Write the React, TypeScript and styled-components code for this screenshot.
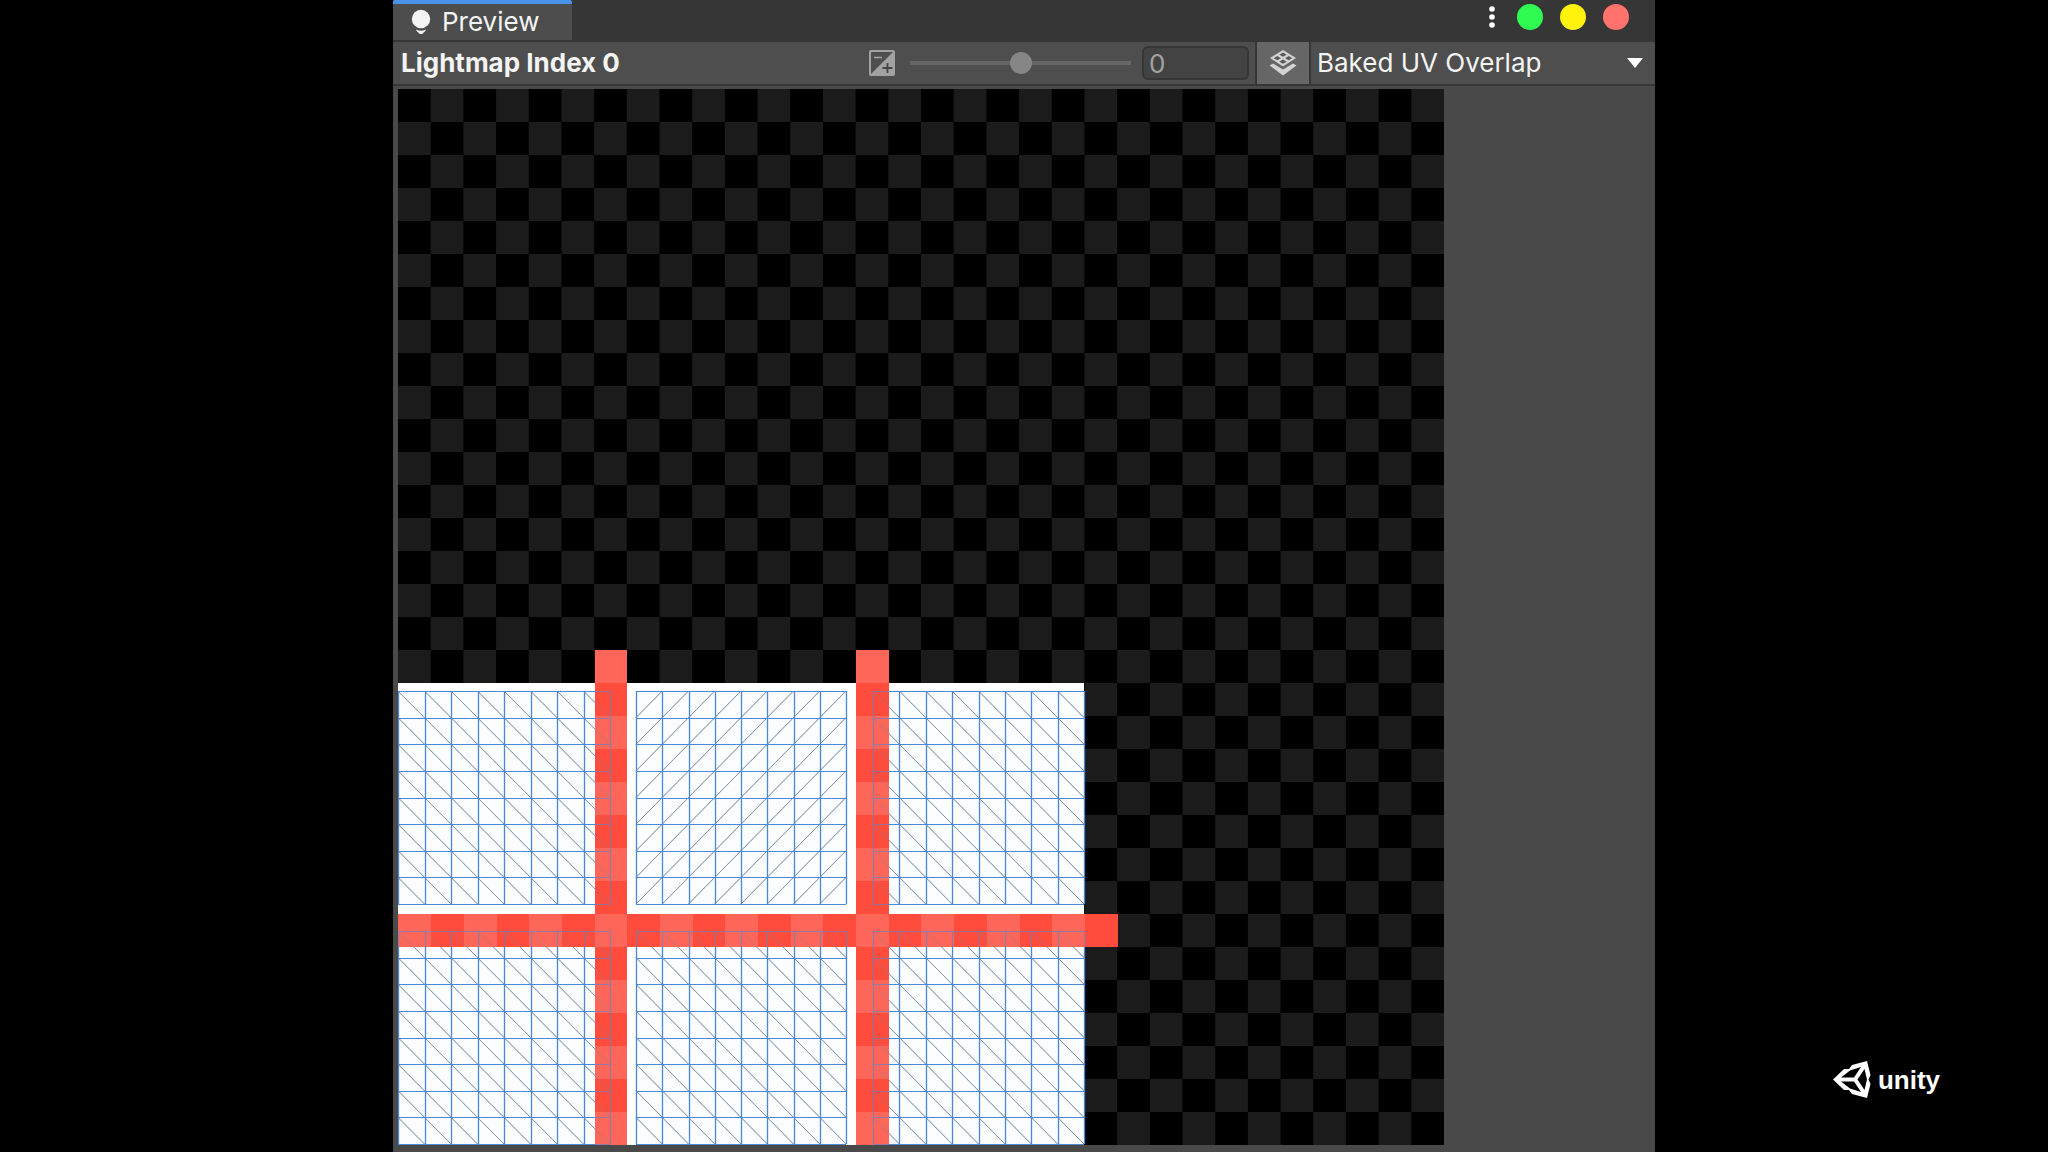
import React from "react";
import styled, { createGlobalStyle } from "styled-components";

const GlobalStyle = createGlobalStyle`
  * { box-sizing: border-box; }
  body { margin: 0; background: #000; }
`;

const Page = styled.div`
  display: grid;
  grid-template-columns: 393fr 1262fr 393fr;
  min-height: 100vh;
  background: #000;
  color: #f4f4f4;
  font-family: Inter, "Liberation Sans", sans-serif;
  font-size: 26px;
  line-height: 32px;
`;

const Window = styled.main`
  grid-column: 2;
  display: flex;
  flex-direction: column;
  background: #4a494a;
`;

const TabBar = styled.header`
  display: flex;
  align-items: stretch;
  height: 40px;
  background: #363636;
`;

const Tab = styled.button`
  display: flex;
  align-items: center;
  gap: 11px;
  padding: 0 32px 0 18px;
  border: 0;
  border-top: 4px solid #4a93ea;
  border-radius: 2px 2px 0 0;
  background: #4d4d4d;
  color: inherit;
  font: inherit;
`;

const WindowControls = styled.div`
  display: flex;
  align-items: center;
  gap: 17px;
  margin-left: auto;
  padding: 0 26px 6px 0;
`;

const MenuButton = styled.button`
  display: flex;
  padding: 0;
  margin-right: 5px;
  border: 0;
  background: none;
`;

const Light = styled.button<{ $color: string }>`
  width: 26px;
  height: 26px;
  padding: 0;
  border: 0;
  border-radius: 50%;
  background: ${(p) => p.$color};
`;

const Toolbar = styled.div`
  display: flex;
  align-items: stretch;
  height: 46px;
  border-top: 2px solid #363636;
  border-bottom: 2px solid #363636;
  background: #4e4e4e;
`;

const Title = styled.h1`
  display: flex;
  align-items: center;
  margin: 0 auto 0 0;
  padding-left: 8px;
  font: inherit;
  font-weight: 700;
`;

const Exposure = styled.div`
  display: flex;
  align-items: center;
  gap: 15px;
  padding-right: 6px;
`;

const Slider = styled.input`
  appearance: none;
  width: 221px;
  height: 22px;
  margin: 0;
  background: linear-gradient(#666, #666) center / 100% 4px no-repeat;
  &::-webkit-slider-thumb {
    appearance: none;
    width: 22px;
    height: 22px;
    border-radius: 50%;
    background: #868686;
  }
`;

const NumberField = styled.input`
  width: 107px;
  height: 34px;
  margin-left: -4px;
  padding: 0 5px;
  border: 2px solid #363636;
  border-radius: 6px;
  background: #434343;
  color: #a2a2a2;
  font: inherit;
`;

const OverlayButton = styled.button`
  display: flex;
  align-items: center;
  justify-content: center;
  width: 56px;
  padding: 0;
  border: 0 solid #363636;
  border-width: 0 2px;
  background: #666;
`;

const SelectWrap = styled.div`
  position: relative;
  display: flex;
  width: 344px;
`;

const Select = styled.select`
  appearance: none;
  width: 100%;
  padding: 0 40px 0 6px;
  border: 0;
  background: transparent;
  color: inherit;
  font: inherit;
`;

const Arrow = styled.svg`
  position: absolute;
  top: 16px;
  right: 12px;
  pointer-events: none;
`;

const Viewport = styled.section`
  display: grid;
  grid-template-columns: 1046fr 211fr;
  padding: 3px 0 7px 5px;
`;

const Lightmap = styled.svg`
  display: block;
  width: 100%;
  height: auto;
`;

const Brand = styled.footer`
  display: flex;
  align-items: center;
  align-self: end;
  justify-self: end;
  gap: 7px;
  padding: 0 108px 53px 0;
  color: #fff;
  font-family: "Liberation Sans", sans-serif;
  font-weight: 700;
`;

const CELLS = 32;
const MAP_W = 1046;
const MAP_H = 1056;
const CELL_W = MAP_W / CELLS;
const CELL_H = MAP_H / CELLS;
const STEPS = 8;

const MESHES = [
  { x: 0, y: 602, w: 212, h: 213, rising: false },
  { x: 238, y: 602, w: 210, h: 213, rising: true },
  { x: 475, y: 602, w: 211, h: 213, rising: false },
  { x: 0, y: 842, w: 212, h: 213, rising: false },
  { x: 238, y: 842, w: 210, h: 213, rising: false },
  { x: 475, y: 842, w: 211, h: 213, rising: false },
];

const overlaps = (col: number, row: number) =>
  ((col === 6 || col === 14) && row >= 17) || (row === 25 && col <= 21);

function Cells() {
  const tiles: React.ReactNode[] = [];
  for (let row = 0; row < CELLS; row++) {
    for (let col = 0; col < CELLS; col++) {
      if ((row + col) % 2 === 1) {
        tiles.push(
          <rect key={`${row}-${col}`} x={col * CELL_W} y={row * CELL_H} width={CELL_W} height={CELL_H} />
        );
      }
    }
  }
  return <g fill="#1c1b1c">{tiles}</g>;
}

function Overlaps() {
  const tiles: React.ReactNode[] = [];
  for (let row = 17; row < CELLS; row++) {
    for (let col = 0; col < 22; col++) {
      if (overlaps(col, row)) {
        const x = Math.ceil(col * CELL_W);
        tiles.push(
          <rect
            key={`${row}-${col}`}
            x={x}
            y={row * CELL_H}
            width={Math.ceil((col + 1) * CELL_W) - x}
            height={CELL_H}
            fill={(row + col) % 2 === 1 ? "#ff665a" : "#ff4c3c"}
          />
        );
      }
    }
  }
  return <g shapeRendering="crispEdges">{tiles}</g>;
}

function Wireframes() {
  return (
    <>
      {MESHES.map((m) => {
        const dx = m.w / STEPS;
        const dy = m.h / STEPS;
        let grid = "";
        let diagonals = "";
        for (let i = 0; i <= STEPS; i++) {
          const gx = Math.round(m.x + i * dx) + 0.5;
          const gy = Math.round(m.y + i * dy) + 0.5;
          grid += `M${gx} ${m.y}v${m.h}M${m.x} ${gy}h${m.w}`;
        }
        for (let r = 0; r < STEPS; r++) {
          for (let c = 0; c < STEPS; c++) {
            const x = m.x + c * dx;
            const y = m.y + r * dy;
            diagonals += m.rising
              ? `M${x} ${y + dy}L${x + dx} ${y}`
              : `M${x} ${y}L${x + dx} ${y + dy}`;
          }
        }
        return (
          <g key={`${m.x}-${m.y}`} fill="none">
            <path d={diagonals} stroke="#7088a8" strokeWidth="0.8" />
            <path d={grid} stroke="#4a88d8" strokeWidth="1.2" />
          </g>
        );
      })}
    </>
  );
}

export default function App() {
  return (
    <>
      <GlobalStyle />
      <Page>
        <Window>
          <TabBar>
            <Tab type="button">
              <svg width="20" height="26" viewBox="0 0 20 26" fill="#f4f4f4" aria-hidden="true">
                <circle cx="10" cy="10" r="9.2" />
                <path d="M5 20.5q5 2.4 10 0q-.4 2.2-2.4 3q-.6 1.6-2.6 1.6t-2.6-1.6q-2-.8-2.4-3z" />
              </svg>
              Preview
            </Tab>
            <WindowControls>
              <MenuButton type="button" aria-label="Menu">
                <svg width="6" height="22" viewBox="0 0 6 22" fill="#fff">
                  <circle cx="3" cy="3" r="2.8" />
                  <circle cx="3" cy="11" r="2.8" />
                  <circle cx="3" cy="19" r="2.8" />
                </svg>
              </MenuButton>
              <Light type="button" aria-label="Minimize" $color="#30fb50" />
              <Light type="button" aria-label="Maximize" $color="#fff20c" />
              <Light type="button" aria-label="Close" $color="#ff736c" />
            </WindowControls>
          </TabBar>
          <Toolbar>
            <Title>Lightmap Index 0</Title>
            <Exposure>
              <svg width="26" height="26" viewBox="0 0 26 26" aria-hidden="true">
                <rect x="1" y="1" width="24" height="24" rx="1" fill="none" stroke="#a2a2a2" strokeWidth="2" />
                <path d="M25 1V25H1z" fill="#a2a2a2" />
                <path d="M5 7.5h8" stroke="#a2a2a2" strokeWidth="1.6" />
                <path d="M18.5 13v10M13.5 18h10" stroke="#444" strokeWidth="1.8" />
              </svg>
              <Slider type="range" min={-10} max={10} defaultValue={0} aria-label="Exposure" />
              <NumberField type="text" defaultValue="0" aria-label="Exposure value" />
            </Exposure>
            <OverlayButton type="button" aria-label="Show UV overlay">
              <svg width="28" height="26" viewBox="0 0 28 26">
                <path d="M0.500 15.500L4 13.500 14 19.500 24 13.500l3.500 2L14 25.500z" fill="#d2d2d2" />
                <path d="M14 0L27 8 14 16.500 1 8z" fill="#d2d2d2" />
                <g fill="#5a5a5a">
                  <path d="M14 2.600l3.600 2.100L14 6.800l-3.600-2.100z" />
                  <path d="M8.300 6.100l3.600 2.100-3.600 2.100-3.600-2.100z" />
                  <path d="M19.700 6.100l3.600 2.100-3.600 2.100-3.600-2.100z" />
                  <path d="M14 9.600l3.600 2.100-3.600 2.100-3.600-2.100z" />
                </g>
              </svg>
            </OverlayButton>
            <SelectWrap>
              <Select aria-label="Preview mode" defaultValue="overlap">
                <option value="overlap">Baked UV Overlap</option>
              </Select>
              <Arrow width="16" height="10" viewBox="0 0 16 10" fill="#fff" aria-hidden="true">
                <path d="M0 0h16L8 10z" />
              </Arrow>
            </SelectWrap>
          </Toolbar>
          <Viewport>
            <Lightmap viewBox={`0 0 ${MAP_W} ${MAP_H}`} role="img" aria-label="Baked lightmap UV overlap">
              <rect width={MAP_W} height={MAP_H} fill="#000" />
              <Cells />
              <rect y="594" width="686" height="462" fill="#fff" />
              {MESHES.map((m) => (
                <rect key={`${m.x}-${m.y}`} x={m.x} y={m.y} width={m.w} height={m.h} fill="#fbfdff" />
              ))}
              <Wireframes />
              <Overlaps />
              <g opacity="0.6">
                <Wireframes />
              </g>
            </Lightmap>
          </Viewport>
        </Window>
        <Brand>
          <svg width="38" height="38" viewBox="0 0 38 38" fill="#fff" fillRule="evenodd" aria-hidden="true">
            <path d="M0 18.500L11 8H16L19 4 34 0 37.500 14 35.500 18.500 37.500 23 34 37 19 33 16 29H11zM8 16.500H21L28 6 17 9.500zM8 20.500H21L28 31 17 27.500zM24.500 18.500L31.500 8 34 18.500 31.500 29z" />
          </svg>
          <span>unity</span>
        </Brand>
      </Page>
    </>
  );
}
